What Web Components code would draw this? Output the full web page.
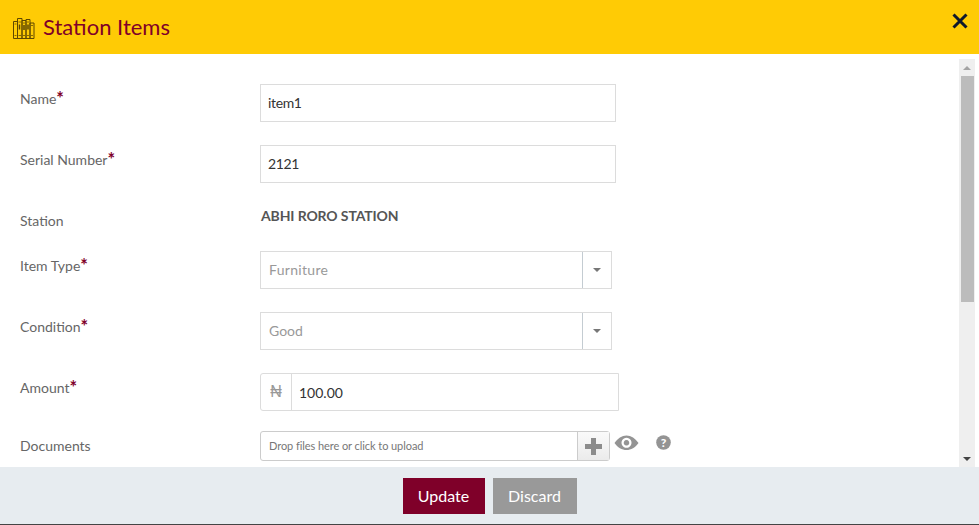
<!DOCTYPE html>
<html><head><meta charset="utf-8"><style>
html,body{margin:0;padding:0;height:100%;overflow:hidden;background:#fff}
body{font-family:Lato,"Liberation Sans",sans-serif}
</style></head><body>
<station-dialog>
<form-row label="Name" req><text-box value="item1"></text-box></form-row>
<form-row label="Serial Number" req><text-box value="2121"></text-box></form-row>
<form-row label="Station" kind="static"><span style="font:700 14px/20px Lato,sans-serif;color:#555;letter-spacing:-.12px;padding-left:1px">ABHI RORO STATION</span></form-row>
<form-row label="Item Type" req><select-box value="Furniture" ls=".3px"></select-box></form-row>
<form-row label="Condition" req><select-box value="Good"></select-box></form-row>
<form-row label="Amount" req kind="short"><amount-box value="100.00"></amount-box></form-row>
<form-row label="Documents" kind="doc"><upload-box></upload-box></form-row>
</station-dialog>
<script>
function def(name,html){customElements.define(name,class extends HTMLElement{connectedCallback(){if(this.shadowRoot)return;const r=this.attachShadow({mode:'open'});r.innerHTML=html(this);}})}
def('station-dialog',()=>`<style>
:host{display:flex;flex-direction:column;height:525px;box-sizing:border-box;border-bottom:1px solid #444}
header{flex:none;height:54px;background:#ffcb05;display:flex;align-items:center;padding-left:12px}
h1{margin:0 0 2px 7px;font:400 22px Lato,sans-serif;color:#7f0029;}
.i{display:block;margin-top:4px}
.x{margin-left:auto;margin-right:10px;width:18px;height:18px;display:block;margin-top:-12px}
main{flex:1;min-height:0;display:flex;overflow:hidden}
.body{flex:1;min-width:0;overflow:hidden;padding:30px 0 0 20px}
.sb{flex:none;width:16px;margin:5px 4px 0 0;background:#efefef;display:flex;flex-direction:column;align-items:center;box-sizing:border-box}
.up,.dn{flex:none;height:17px;display:flex;align-items:center;justify-content:center}
.up i{border:4px solid transparent;border-top:0;border-bottom:4px solid #a3a3a3}
.dn{margin-top:auto}.dn i{border:4px solid transparent;border-bottom:0;border-top:4px solid #444}
.th{width:13px;height:226px;background:#bcbcbc;flex:none;margin-left:1px}
footer{flex:none;height:57px;background:#e7ecf0;display:flex;justify-content:center;gap:8px;padding-top:11px;box-sizing:border-box}
button{height:36px;border:0;font:400 16px Lato,sans-serif;color:#fff;padding:0 0 2px;margin:0}
.p{width:82px;background:#7f0029}.g{width:84px;background:#999}
</style>
<header><svg class="i" width="24" height="24" viewBox="0 0 24 24" fill="none" stroke="#5e4700" stroke-width="1"><path d="M1.500 4.500h4v17h-4zM5.500 1.500h4.500v20h-4.500zM10 3.500h4v18h-4zM14 2.500h4v19h-4zM18 6h4v15.500h-4z"/><path d="M2.500 7h2M2.500 18.500h2M6.500 5h2.500M6.500 18.500h2.500M11 6h2M11 18.500h2M15 5h2M15 18.500h2M19 8.500h2M19 18.500h2" stroke="#8a6a00"/><path d="M7.500 7.500v5M12 8v5M16 7.500v5" stroke-width="1.500"/></svg><h1>Station Items</h1>
<svg class="x" viewBox="0 0 18 18"><path d="M2.500 2.500 15.500 15.500M15.500 2.500 2.500 15.500" stroke="#10182b" stroke-width="3"/></svg></header>
<main><div class="body"><slot></slot></div><div class="sb"><div class="up"><i></i></div><div class="th"></div><div class="dn"><i></i></div></div></main>
<footer><button class="p">Update</button><button class="g">Discard</button></footer>`);
def('form-row',h=>{const k=h.getAttribute('kind')||'';const mb={static:'23px',short:'20px',doc:'0'}[k]||'23px';const ht=k==='static'?'22px':k==='doc'?'30px':'38px';
return `<style>:host{display:grid;grid-template-columns:240px 1fr;height:${ht};margin-bottom:${mb};}
.l{font:400 14px/20px Lato,sans-serif;color:#666;padding-top:5px}
b{font-weight:700;color:#7f0029;font-size:18px;line-height:0;position:relative;top:1px}
.c{display:flex;align-items:${k==='static'?'flex-start':'stretch'}}</style>
<div class="l">${h.getAttribute('label')}${h.hasAttribute('req')?'<b>*</b>':''}</div><div class="c"><slot></slot></div>`});
def('text-box',h=>`<style>:host{display:flex;align-items:center;box-sizing:border-box;width:356px;height:38px;border:1px solid #dcdcdc;padding:0 7px 2px;font:400 14px Lato,sans-serif;color:#333;letter-spacing:-.35px}</style>${h.getAttribute('value')}`);
def('select-box',h=>`<style>:host{display:flex;box-sizing:border-box;width:352px;height:38px;border:1px solid #dcdcdc;font:400 14px Lato,sans-serif;color:#999}
.v{flex:1;display:flex;align-items:center;padding:0 0 2px 8px;border-right:1px solid #c4ccd2;letter-spacing:${h.getAttribute('ls')||'0'}}
.a{width:28px;display:flex;align-items:center;justify-content:center}.a i{border:4px solid transparent;border-bottom:0;border-top:4px solid #777}</style><div class="v">${h.getAttribute('value')}</div><div class="a"><i></i></div>`);
def('amount-box',h=>`<style>:host{display:flex;box-sizing:border-box;width:359px;height:38px;border:1px solid #dcdcdc;border-radius:3px 0 0 3px;font:400 14px Lato,sans-serif;color:#333}
.s{flex:none;width:30px;border-right:1px solid #dcdcdc;display:flex;align-items:center;justify-content:center;color:#999;font:400 16px "Liberation Sans",sans-serif}
.v{flex:1;display:flex;align-items:center;padding-left:7px}</style><div class="s">₦</div><div class="v">${h.getAttribute('value')}</div>`);
def('upload-box',()=>`<style>:host{display:flex;align-items:flex-start}
.b{display:flex;box-sizing:border-box;width:350px;height:30px;border:1px solid #ccc;border-radius:3px;font:400 11px Lato,sans-serif;color:#777}
.t{flex:1;display:flex;align-items:center;padding:0 0 1px 8px;letter-spacing:-.07px}
.p{flex:none;width:31px;border-left:1px solid #ccc;background:linear-gradient(#fafafa,#ebebeb);display:flex;align-items:center;justify-content:center}
.e{margin:2px 0 0 4px;display:block}.q{margin:4px 0 0 17px;display:block}</style>
<div class="b"><div class="t">Drop files here or click to upload</div><div class="p"><svg width="17" height="17" viewBox="0 0 17 17"><path d="M8.500 0v17M0 8.500h17" stroke="#8c8c8c" stroke-width="5"/></svg></div></div>
<svg class="e" width="25" height="20" viewBox="0 0 25 20"><path fill-rule="evenodd" fill="#949494" d="M0.500 10C3.500 5.500 8 2.500 12.500 2.500S21.500 5.500 24.500 10C21.500 14.500 17 17 12.500 17S3.500 14.500 0.500 10ZM12.500 4.800a5 5 0 1 0 .01 0ZM12.500 7a2.800 2.800 0 1 1-.01 0Z"/></svg>
<svg class="q" width="15" height="15" viewBox="0 0 15 15"><circle cx="7.500" cy="7.500" r="7.300" fill="#949494"/><text x="7.500" y="12" text-anchor="middle" font-family="Lato,sans-serif" font-weight="900" font-size="12" fill="#fff">?</text></svg>`);
</script>
</body></html>
